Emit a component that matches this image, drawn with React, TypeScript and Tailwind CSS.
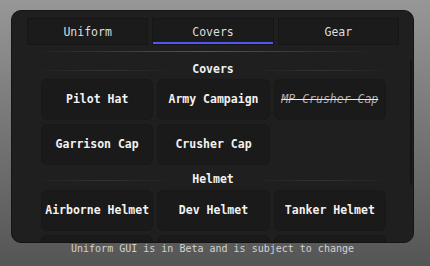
import { useState } from 'react'

type Item = { name: string; locked?: boolean }

const sections: { title: string; items: Item[] }[] = [
  {
    title: 'Covers',
    items: [
      { name: 'Pilot Hat' },
      { name: 'Army Campaign' },
      { name: 'MP Crusher Cap', locked: true },
      { name: 'Garrison Cap' },
      { name: 'Crusher Cap' },
    ],
  },
  {
    title: 'Helmet',
    items: [
      { name: 'Airborne Helmet' },
      { name: 'Dev Helmet' },
      { name: 'Tanker Helmet' },
      { name: '' },
      { name: '' },
      { name: '' },
    ],
  },
]

const tabs = ['Uniform', 'Covers', 'Gear']

function SectionHeading({ title }: { title: string }) {
  return (
    <div className="ml-[21px] w-[360px] h-[18px] flex items-center gap-[18px]">
      <div className="flex-1 h-px bg-linear-to-r from-transparent via-[#333333] to-transparent" />
      <span className="font-bold text-[#f2f2f2]">{title}</span>
      <div className="flex-1 h-px bg-linear-to-r from-transparent via-[#333333] to-transparent" />
    </div>
  )
}

export default function App() {
  const [active, setActive] = useState('Covers')

  return (
    <div className="w-[430px] h-[266px] overflow-hidden bg-linear-to-b from-[#979797] to-[#555555] pl-[11px] pt-[10px] font-['DejaVu_Sans_Mono',monospace]">
      {/* Panel */}
      <div className="relative w-[403px] h-[233px] rounded-[10px] border border-[#141414] bg-[#1f1f1f] overflow-hidden text-[11.5px]">
        {/* Tabs */}
        <div className="mt-[7px] pl-[15px] pr-[14px] grid grid-cols-3 gap-1">
          {tabs.map((t) => (
            <button
              key={t}
              onClick={() => setActive(t)}
              className={
                t === active
                  ? 'h-[27px] pt-[2px] bg-[#1b1b1b] border border-[#161616] shadow-[inset_0_-2px_0_#5157ee] text-[#dedede]'
                  : 'h-[27px] pt-[2px] bg-[#1b1b1b] border border-[#161616] text-[#dedede]'
              }
            >
              {t}
            </button>
          ))}
        </div>
        <div className="mt-[6px] ml-[21px] w-[344px] h-px bg-linear-to-r from-transparent via-[#555555] to-transparent" />

        {/* Scroll area */}
        <div className="pt-[9px]">
          {sections.map((s, i) => (
            <div key={s.title} className={i === 0 ? '' : 'mt-[6px]'}>
              <SectionHeading title={s.title} />
              <div className={i === 0 ? 'ml-[29px] w-[345px] grid grid-cols-3 gap-1' : 'mt-px ml-[29px] w-[345px] grid grid-cols-3 gap-1'}>
                {s.items.map((it, j) => (
                  <button
                    key={j}
                    className="h-[41px] pt-px rounded-[6px] bg-[#1a1a1a] border border-[#181818] flex items-center justify-center"
                  >
                    {it.locked ? (
                      <span className="italic text-[#b0b0b0] line-through decoration-[#f0f0f0]">{it.name}</span>
                    ) : it.name ? (
                      <span className="font-bold text-[#f2f2f2]">{it.name}</span>
                    ) : null}
                  </button>
                ))}
              </div>
            </div>
          ))}
        </div>

        {/* Scrollbar thumb */}
        <div className="absolute right-[1px] top-[49px] w-[2px] h-[125px] bg-[#151515] rounded-full" />
      </div>

      <p className="w-[403px] text-center text-[10px] leading-[12px] text-[#d2d2d2]">
        Uniform GUI is in Beta and is subject to change
      </p>
    </div>
  )
}
